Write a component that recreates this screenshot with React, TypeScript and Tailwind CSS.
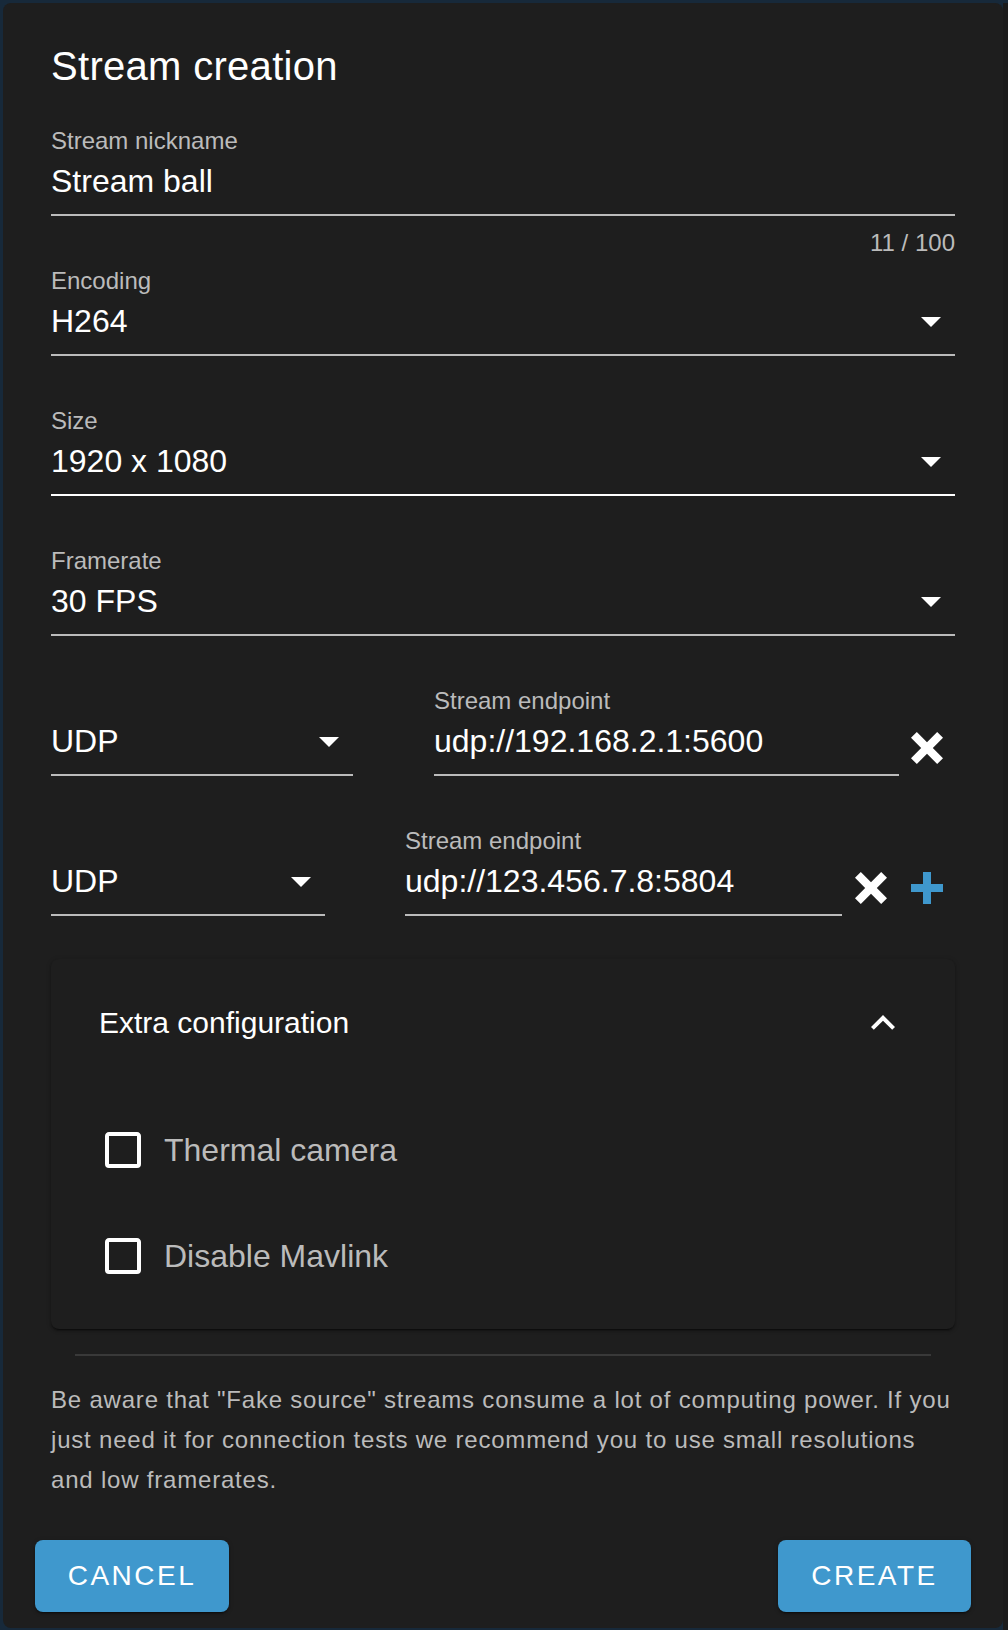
import React from 'react';

const FONT = "font-['Liberation_Sans',Arial,sans-serif]";

const MenuDown = () => (
  <svg viewBox="0 0 24 24" className="w-12 h-12 shrink-0" fill="#ffffff">
    <path d="M7,10L12,15L17,10H7Z" />
  </svg>
);

const CloseThick = () => (
  <svg viewBox="0 0 24 24" className="w-12 h-12 shrink-0" fill="#ffffff">
    <path d="M20 6.91L17.09 4L12 9.09L6.91 4L4 6.91L9.09 12L4 17.09L6.91 20L12 14.91L17.09 20L20 17.09L14.91 12L20 6.91Z" />
  </svg>
);

const PlusThick = () => (
  <svg viewBox="0 0 24 24" className="w-12 h-12 shrink-0" fill="#3f98cd">
    <path d="M20 14H14V20H10V14H4V10H10V4H14V10H20V14Z" />
  </svg>
);

const ChevronUp = () => (
  <svg viewBox="0 0 24 24" className="w-12 h-12 shrink-0" fill="#ffffff">
    <path d="M7.41,15.41L12,10.83L16.59,15.41L18,14L12,8L6,14L7.41,15.41Z" />
  </svg>
);

const CheckboxBlank = () => (
  <svg viewBox="0 0 24 24" className="w-12 h-12 shrink-0" fill="#ffffff">
    <path d="M19,3H5C3.89,3 3,3.89 3,5V19A2,2 0 0,0 5,21H19A2,2 0 0,0 21,19V5C21,3.89 20.1,3 19,3M19,5V19H5V5H19Z" />
  </svg>
);

interface FieldProps {
  label?: string;
  value: string;
  select?: boolean;
  hover?: boolean;
  className?: string;
}

// label 24 + gap 8 + value 40 + gap 13 + line 2
const Field: React.FC<FieldProps> = ({ label, value, select, hover, className }) => (
  <div className={className}>
    <div className="h-[24px] text-[24px] leading-[24px] text-[#bbbbbb] whitespace-nowrap">
      {label}
    </div>
    <div className="mt-[8px] h-[40px] flex items-center justify-between">
      <span className="text-[32px] leading-[40px] text-white whitespace-nowrap">{value}</span>
      {select && <MenuDown />}
    </div>
    <div className={`mt-[13px] h-[2px] ${hover ? 'bg-white' : 'bg-[#bbbbbb]'}`} />
  </div>
);

const CheckRow: React.FC<{ label: string; className?: string }> = ({ label, className }) => (
  <div className={`flex items-center h-[48px] ${className ?? ''}`}>
    <CheckboxBlank />
    <span className="ml-[17px] text-[32px] leading-[48px] text-[#bbbbbb]">{label}</span>
  </div>
);

export default function App() {
  return (
    <div className={`${FONT} w-[1008px] h-[1630px] bg-[#17293a] flex pt-[3px] pl-[3px]`}>
      <div className="w-[1000px] h-[1625px] bg-[#1e1e1e] rounded-[8px] pt-[39px] px-[48px] flex flex-col">
        <h1 className="h-[48px] text-[40px] leading-[48px] text-white font-normal tracking-[0.3px]">
          Stream creation
        </h1>

        <Field className="mt-[39px]" label="Stream nickname" value="Stream ball" />
        <div className="mt-[15px] h-[24px] text-[24px] leading-[24px] text-[#bbbbbb] text-right">
          11 / 100
        </div>

        <Field className="mt-[14px]" label="Encoding" value="H264" select />
        <Field className="mt-[53px]" label="Size" value="1920 x 1080" select hover />
        <Field className="mt-[53px]" label="Framerate" value="30 FPS" select />

        <div className="mt-[53px] flex items-start">
          <Field className="w-[302px]" value="UDP" select />
          <Field className="ml-[81px] w-[465px]" label="Stream endpoint" value="udp://192.168.2.1:5600" />
          <div className="ml-[4px] mt-[35px]">
            <CloseThick />
          </div>
        </div>

        <div className="mt-[53px] flex items-start">
          <Field className="w-[274px]" value="UDP" select />
          <Field className="ml-[80px] w-[437px]" label="Stream endpoint" value="udp://123.456.7.8:5804" />
          <div className="ml-[5px] mt-[35px] flex gap-[8px]">
            <CloseThick />
            <PlusThick />
          </div>
        </div>

        <div className="mt-[43px] h-[370px] rounded-[8px] bg-[#1e1e1e] shadow-[0_3px_1px_-2px_rgba(0,0,0,0.35),0_2px_2px_0_rgba(0,0,0,0.25),0_1px_5px_0_rgba(0,0,0,0.22)]">
          <div className="h-[128px] px-[48px] flex items-center justify-between">
            <span className="text-[30px] leading-[30px] text-white">Extra configuration</span>
            <ChevronUp />
          </div>
          <div className="px-[48px] pt-[39px]">
            <CheckRow label="Thermal camera" />
            <CheckRow className="mt-[58px]" label="Disable Mavlink" />
          </div>
        </div>

        <div className="mt-[25px] mx-[24px] h-[2px] bg-[#393939]" />

        <p className="mt-[24px] text-[24px] leading-[40px] text-[#bbbbbb] tracking-[0.8px]">
          Be aware that "Fake source" streams consume a lot of computing power. If you just need it
          for connection tests we recommend you to use small resolutions and low framerates.
        </p>

        <div className="mt-[40px] -mx-[16px] flex justify-between">
          <button className="w-[194px] h-[72px] rounded-[8px] bg-[#3f98cd] text-white text-[28px] tracking-[2.5px] uppercase shadow-[0_3px_1px_-2px_rgba(0,0,0,0.3),0_2px_2px_0_rgba(0,0,0,0.2),0_1px_5px_0_rgba(0,0,0,0.2)]">
            Cancel
          </button>
          <button className="w-[193px] h-[72px] rounded-[8px] bg-[#3f98cd] text-white text-[28px] tracking-[2.5px] uppercase shadow-[0_3px_1px_-2px_rgba(0,0,0,0.3),0_2px_2px_0_rgba(0,0,0,0.2),0_1px_5px_0_rgba(0,0,0,0.2)]">
            Create
          </button>
        </div>
      </div>
      <div className="w-[5px] bg-[#1b1b1b]" />
    </div>
  );
}
